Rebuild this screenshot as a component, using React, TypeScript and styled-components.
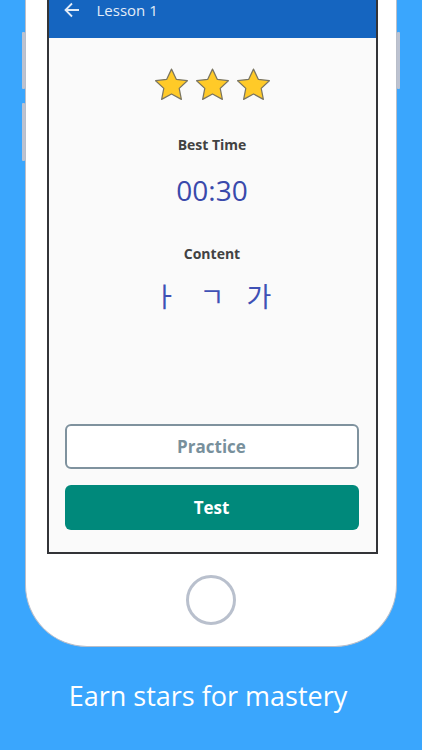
import styled, { createGlobalStyle } from "styled-components";

const GlobalStyle = createGlobalStyle`
  html, body {
    margin: 0;
    padding: 0;
    background: #3aa6fd;
    font-family: "Open Sans", "Noto Sans", "Noto Sans CJK KR", sans-serif;
  }
`;

const Page = styled.div`
  width: 422px;
  height: 750px;
  overflow: hidden;
  background: #3aa6fd;
  display: flex;
  flex-direction: column;
`;

const DeviceRow = styled.div`
  display: flex;
  align-items: flex-start;
  padding-left: 22px;
`;

const SideButtons = styled.div`
  width: 3px;
  display: flex;
  flex-direction: column;
  gap: 14px;
  padding-top: 32px;
`;

const SideButton = styled.div<{ $h: number }>`
  width: 3px;
  height: ${(p) => p.$h}px;
  background: #bcc2d0;
  border-radius: 1px;
`;

const Phone = styled.div`
  width: 370px;
  height: 646px;
  background: #ffffff;
  border: 1.5px solid #b9bec9;
  border-top: none;
  border-radius: 0 0 62px 62px;
  display: flex;
  flex-direction: column;
  align-items: center;
`;

const Screen = styled.div`
  width: 327px;
  height: 552px;
  margin-left: 2px;
  border: 2px solid #333438;
  border-top: none;
  background: #fafafa;
  display: flex;
  flex-direction: column;
`;

const Header = styled.div`
  height: 38px;
  background: #1565c0;
  display: flex;
  align-items: flex-start;
  padding-left: 15px;
  gap: 17px;
  color: #e3ecf7;
  font-size: 15px;
  line-height: 20px;
`;

const Stars = styled.div`
  display: flex;
  justify-content: center;
  gap: 4px;
  margin-top: 29px;
`;

const Label = styled.div<{ $top: number }>`
  margin-top: ${(p) => p.$top}px;
  text-align: center;
  font-weight: 700;
  font-size: 14px;
  line-height: 18px;
  color: #424242;
`;

const BigValue = styled.div<{ $top: number }>`
  margin-top: ${(p) => p.$top}px;
  text-align: center;
  font-size: 28px;
  line-height: 36px;
  color: #3949ab;
`;

const Jamo = styled.div`
  margin-top: 13px;
  display: flex;
  justify-content: center;
  gap: 22px;
  font-family: "Noto Sans CJK KR", sans-serif;
  font-size: 27px;
  line-height: 40px;
  color: #3f51b5;
`;

const Actions = styled.div`
  margin-top: auto;
  padding: 0 17px 22px 16px;
  display: flex;
  flex-direction: column;
  gap: 16px;
`;

const Button = styled.button<{ $primary?: boolean }>`
  height: 45px;
  border-radius: 6px;
  font-family: "Open Sans", sans-serif;
  font-weight: 700;
  font-size: 17px;
  border: ${(p) => (p.$primary ? "none" : "2px solid #7f929e")};
  background: ${(p) => (p.$primary ? "#00897b" : "#ffffff")};
  color: ${(p) => (p.$primary ? "#ffffff" : "#78909c")};
`;

const HomeButton = styled.div`
  width: 44px;
  height: 44px;
  margin-top: 21px;
  border-radius: 50%;
  border: 3px solid #b9c0cd;
`;

const Caption = styled.div`
  margin-top: 31px;
  padding-right: 6px;
  text-align: center;
  color: #ffffff;
  font-size: 27px;
  line-height: 36px;
`;

function Star() {
  return (
    <svg width="37" height="36" viewBox="0 0 24 23">
      <path
        d="M12 1.2l3.1 6.6 7.2.9-5.3 5 1.4 7.1L12 17.3l-6.4 3.5L7 13.7 1.7 8.7l7.2-.9z"
        fill="#ffca28"
        stroke="#7a7560"
        strokeWidth="0.8"
        strokeLinejoin="round"
      />
    </svg>
  );
}

function BackArrow() {
  return (
    <svg width="16" height="20" viewBox="0 0 16 20">
      <path
        d="M15 10H2M8 3.5L1.5 10 8 16.5"
        fill="none"
        stroke="#e3ecf7"
        strokeWidth="1.8"
      />
    </svg>
  );
}

export default function App() {
  return (
    <>
      <GlobalStyle />
      <Page>
        <DeviceRow>
          <SideButtons>
            <SideButton $h={57} />
            <SideButton $h={58} />
          </SideButtons>
          <Phone>
            <Screen>
              <Header>
                <BackArrow />
                <span>Lesson 1</span>
              </Header>
              <Stars>
                <Star />
                <Star />
                <Star />
              </Stars>
              <Label $top={33}>Best Time</Label>
              <BigValue $top={18}>00:30</BigValue>
              <Label $top={37}>Content</Label>
              <Jamo>
                <span>ㅏ</span>
                <span>ㄱ</span>
                <span>가</span>
              </Jamo>
              <Actions>
                <Button>Practice</Button>
                <Button $primary>Test</Button>
              </Actions>
            </Screen>
            <HomeButton />
          </Phone>
          <SideButtons>
            <SideButton $h={57} />
          </SideButtons>
        </DeviceRow>
        <Caption>Earn stars for mastery</Caption>
      </Page>
    </>
  );
}
